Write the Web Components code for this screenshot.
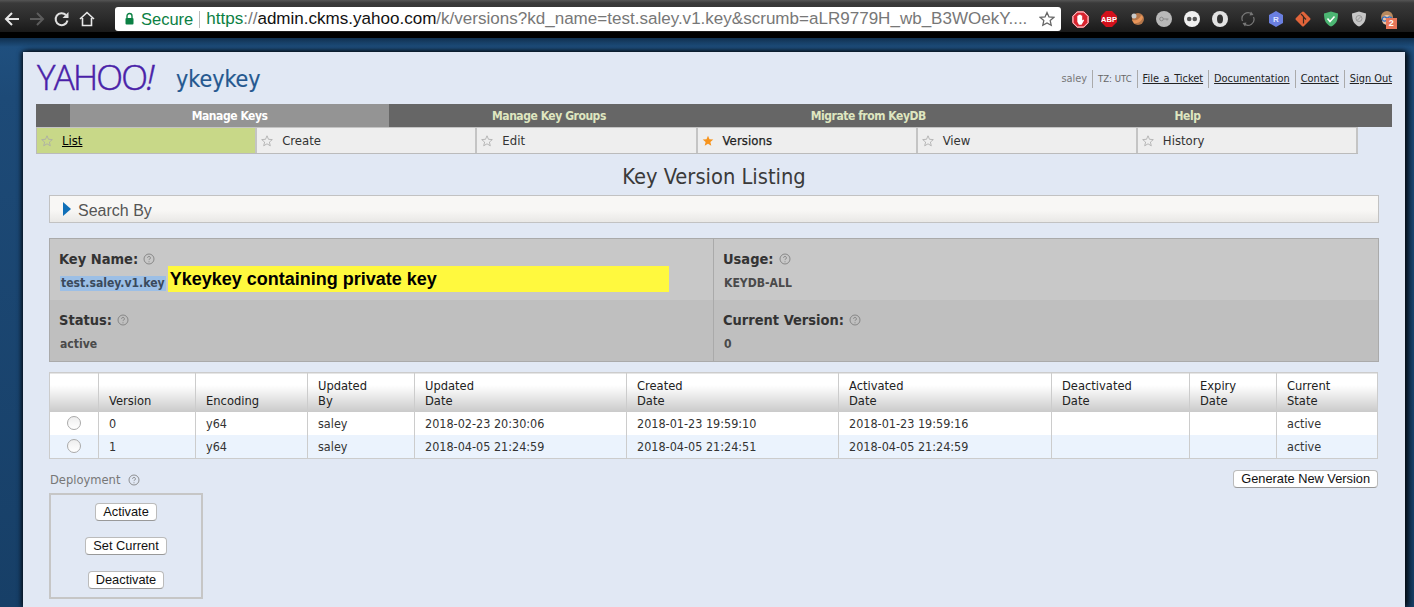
<!DOCTYPE html>
<html>
<head>
<meta charset="utf-8">
<title>Key Version Listing</title>
<style>
  html, body { margin: 0; height: 607px; overflow: hidden; }
  body { background: #1d4a77; font-family: "Open Sans", sans-serif; display: flex; flex-direction: column; }
</style>
</head>
<body>
<browser-bar></browser-bar>
<page-frame>
  <site-header></site-header>
  <main-nav></main-nav>
  <sub-nav></sub-nav>
  <page-title>Key Version Listing</page-title>
  <search-by></search-by>
  <key-info></key-info>
  <version-table></version-table>
  <deploy-panel></deploy-panel>
</page-frame>

<script>
const TEXT_FONT = '"DejaVu Sans Condensed", "DejaVu Sans", sans-serif';

function help(size) {
  return `<svg width="${size}" height="${size}" viewBox="0 0 12 12" style="flex:none"><circle cx="6" cy="6" r="5" fill="none" stroke="#777" stroke-width=".8"/><path d="M4.6 4.8a1.4 1.4 0 1 1 2.1 1.2c-.5.3-.7.5-.7 1.1" fill="none" stroke="#777" stroke-width=".8"/><circle cx="6" cy="8.7" r=".5" fill="#777"/></svg>`;
}

function star(on) {
  const path = "M6 .8l1.5 3.5 3.8.3-2.9 2.5.9 3.7L6 8.8l-3.3 2 .9-3.7L.7 4.6l3.8-.3z";
  return on
    ? `<svg width="12" height="12" viewBox="0 0 12 12" style="flex:none"><path d="${path}" fill="#f7941d"/></svg>`
    : `<svg width="12" height="12" viewBox="0 0 12 12" style="flex:none"><path d="${path}" fill="none" stroke="#aaa" stroke-width=".8"/></svg>`;
}

class BrowserBar extends HTMLElement {
  constructor() {
    super();
    const shadow = this.attachShadow({ mode: "open" });
    shadow.innerHTML = `
      <style>
        :host { display: flex; align-items: center; height: 38px; flex: none; box-sizing: border-box; padding: 6px 0 6px 0;
          background: linear-gradient(#555 0, #3a3a3a 3px, #2a2a2a 50%, #1a1a1a 83%, #000 85%, #000 100%); font-family: "Liberation Sans", sans-serif; }
        .navs { display: flex; align-items: center; width: 115px; flex: none; padding-left: 4px; box-sizing: border-box; gap: 9px; }
        .omni { width: 946px; height: 24px; flex: none; box-sizing: border-box; background: #fff; border-radius: 3px; display: flex; align-items: center; padding: 0 6px 0 9px; white-space: nowrap; overflow: hidden; }
        .sec { color: #0b8043; font-size: 16.5px; margin-left: 6px; }
        .sep { width: 1px; height: 17px; background: #bbb; margin: 0 6px 0 6px; flex: none; }
        .url { flex: 1; min-width: 0; color: #777; font-size: 17.05px; overflow: hidden; }
        .url b { font-weight: 400; color: #111; }
        .url i { font-style: normal; color: #0b8043; }
        .exts { display: flex; align-items: center; flex: 1; padding-left: 11px; gap: 11.8px; }
        .exts svg { flex: none; display: block; }
      </style>
      <div class="navs">
        <svg width="16" height="16" viewBox="0 0 16 16"><path d="M15 8H2M8 2L2 8l6 6" fill="none" stroke="#e8e8e8" stroke-width="2"/></svg>
        <svg width="16" height="16" viewBox="0 0 16 16"><path d="M1 8h13M8 2l6 6-6 6" fill="none" stroke="#5c5c5c" stroke-width="2"/></svg>
        <svg width="16" height="16" viewBox="0 0 16 16"><path d="M13.5 9.5A6 6 0 1 1 12 4" fill="none" stroke="#e0e0e0" stroke-width="2"/><path d="M14.5 1v6h-6z" fill="#e0e0e0"/></svg>
        <svg width="16" height="16" viewBox="0 0 16 16"><path d="M1 8l7-6.5L15 8M3.5 7v7.5h9V7" fill="none" stroke="#e8e8e8" stroke-width="1.6"/></svg>
      </div>
      <div class="omni">
        <svg width="11" height="14" viewBox="0 0 11 14" style="flex:none"><path d="M3 6V4a2.5 2.5 0 0 1 5 0v2" fill="none" stroke="#0b8043" stroke-width="1.4"/><rect x="1.5" y="6" width="8" height="6.5" rx="1" fill="#0b8043"/></svg>
        <span class="sec">Secure</span><span class="sep"></span>
        <span class="url"><i>https</i>://<b>admin.ckms.yahoo.com</b>/k/versions?kd_name=test.saley.v1.key&amp;scrumb=aLR9779H_wb_B3WOekY....</span>
        <svg width="16" height="16" viewBox="0 0 16 16" style="flex:none"><path d="M8 1.5l2 4.4 4.8.5-3.6 3.2 1 4.7L8 11.9l-4.2 2.4 1-4.7L1.2 6.4 6 5.900z" fill="none" stroke="#666" stroke-width="1.3"/></svg>
      </div>
      <div class="exts">
        <svg width="17" height="17" viewBox="0 0 16 16"><path d="M5 0h6l5 5v6l-5 5H5l-5-5V5z" fill="#d9232e"/><path d="M5 0.900h6L15.100 5v6L11 15.100H5L.9 11V5z" fill="none" stroke="#fff" stroke-width=".9"/><path d="M5 8V4.500h1V7.500V3.500h1.200V7.500V3.500h1.200V7.500V4.200h1.200V9l1-1 .8.6L9 13H6.500L5 10z" fill="#fff"/></svg>
        <svg width="16" height="16" viewBox="0 0 16 16"><path d="M5 0h6l5 5v6l-5 5H5l-5-5V5z" fill="#d3111c"/><text x="8" y="10.800" text-anchor="middle" font-size="7.500" font-weight="700" fill="#fff" font-family="Liberation Sans">ABP</text></svg>
        <svg width="16" height="16" viewBox="0 0 16 16"><circle cx="9" cy="8" r="6" fill="#b3764a"/><path d="M3 9c4 1 8-1 9-5l2 2c-1 4-5 7-9 6z" fill="#e9965a"/><circle cx="5" cy="5" r="2.500" fill="#c9c9c9"/></svg>
        <svg width="16" height="16" viewBox="0 0 16 16"><circle cx="8" cy="8" r="8" fill="#b8b8b8"/><circle cx="5.500" cy="8" r="1.800" fill="none" stroke="#888" stroke-width="1"/><path d="M7.300 8h5.200M11 8v1.500" stroke="#888"/></svg>
        <svg width="16" height="16" viewBox="0 0 16 16"><circle cx="8" cy="8" r="8" fill="#f0f0f0"/><circle cx="5.200" cy="8" r="2.300" fill="#555"/><circle cx="10.800" cy="8" r="2.300" fill="#555"/></svg>
        <svg width="16" height="16" viewBox="0 0 16 16"><circle cx="8" cy="8" r="8" fill="#e2e2e2"/><ellipse cx="8" cy="8" rx="3" ry="4.500" fill="#333"/></svg>
        <svg width="16" height="16" viewBox="0 0 16 16"><path d="M2.500 10A6 6 0 0 1 12 3.200M13.500 6A6 6 0 0 1 4 12.800" fill="none" stroke="#777" stroke-width="1.200"/><path d="M11 .5l2.500 3.500-4 .5zM5 15.500L2.500 12l4-.5z" fill="#777"/></svg>
        <svg width="16" height="16" viewBox="0 0 16 16"><path d="M8 0l7 4v8l-7 4-7-4V4z" fill="#6a7fe0"/><text x="8" y="11" text-anchor="middle" font-size="8" font-weight="700" fill="#dfe4ff" font-family="Liberation Sans">R</text></svg>
        <svg width="16" height="16" viewBox="0 0 16 16"><rect x="2.300" y="2.300" width="11.400" height="11.400" rx="1.500" transform="rotate(45 8 8)" fill="#e2643a"/><path d="M6 3l2.500 2.500v7M8.500 6l2.500 2.500" stroke="#3a2a20" stroke-width="1.200" fill="none"/></svg>
        <svg width="16" height="16" viewBox="0 0 16 16"><path d="M1 2.500L8 .5l7 2c0 7-2 11-7 13-5-2-7-6-7-13z" fill="#4cb673"/><path d="M4.500 7.500L7 10.500l4.500-5" stroke="#fff" stroke-width="1.600" fill="none"/></svg>
        <svg width="16" height="16" viewBox="0 0 16 16"><path d="M1 2.500L8 .5l7 2c0 7-2 11-7 13-5-2-7-6-7-13z" fill="#c6c6c6"/><circle cx="8" cy="7.500" r="3" fill="none" stroke="#999" stroke-width="1"/><path d="M6 9.500l4-4" stroke="#999"/></svg>
        <div style="position:relative;width:16px;height:16px;flex:none">
          <svg width="16" height="16" viewBox="0 0 16 16"><circle cx="8" cy="6" r="6" fill="#b98a5e"/><circle cx="8" cy="9" r="5" fill="#e8c4a8"/><circle cx="5.500" cy="8" r="2.200" fill="none" stroke="#2d6cc0" stroke-width="1.200"/><circle cx="10.500" cy="8" r="2.200" fill="none" stroke="#2d6cc0" stroke-width="1.200"/></svg>
          <span style="position:absolute;left:7px;top:7px;width:11px;height:11px;background:#e8765a;color:#fff;font:700 9px/11px 'Liberation Sans';text-align:center">2</span>
        </div>
      </div>
    `;
  }
}

class PageFrame extends HTMLElement {
  constructor() {
    super();
    const shadow = this.attachShadow({ mode: "open" });
    shadow.innerHTML = `
      <style>
        :host { display: block; flex: 1; min-height: 0; overflow: hidden; padding: 14px 9px 0 23px;
          background: linear-gradient(#10304f, #1f4f7e 9px, #1d4a77 60px, #173f67 100%); }
        .sheet { display: flex; flex-direction: column; height: 555px; box-sizing: border-box; padding: 0 13px 0 13px;
          background: #e1e8f4; box-shadow: 0 -1px 5px rgba(0,0,0,.5), 4px 0 6px rgba(0,0,0,.75), -2px 0 4px rgba(0,0,0,.5); font-family: ${TEXT_FONT}; }
      </style>
      <div class="sheet"><slot></slot></div>
    `;
  }
}

class SiteHeader extends HTMLElement {
  constructor() {
    super();
    const shadow = this.attachShadow({ mode: "open" });
    shadow.innerHTML = `
      <style>
        :host { display: flex; align-items: flex-start; height: 52px; flex: none; }
        .logo { font-family: "Open Sans", sans-serif; font-weight: 300; font-size: 35px; line-height: 50px; letter-spacing: -1.8px; color: #4a1fa8; width: 139px; flex: none; margin-left: 1px; -webkit-text-stroke: .5px #4a1fa8; }
        .logo em { font-style: italic; }
        .name { font-size: 23px; line-height: 55px; color: #25588f; flex: 1; -webkit-text-stroke: .2px #25588f; }
        .links { display: flex; align-items: center; margin-top: 18px; font-size: 10.900px; color: #333; }
        .links span, .links a { padding: 0 5px; border-left: 1px solid #aaa; line-height: 18px; white-space: nowrap; }
        .links span:first-child { border: 0; color: #777; }
        .links span:nth-child(2) { color: #666; font-size: 9.500px; }
        .links a { color: #222; text-decoration: underline; }
        .links a:first-of-type { word-spacing: 1.500px; }
        .links a:last-child { padding-right: 0; }
      </style>
      <div class="logo">YAHOO<em>!</em></div>
      <div class="name">ykeykey</div>
      <div class="links">
        <span>saley</span><span>TZ: UTC</span><a>File a Ticket</a><a>Documentation</a><a>Contact</a><a>Sign Out</a>
      </div>
    `;
  }
}

class MainNav extends HTMLElement {
  constructor() {
    super();
    const shadow = this.attachShadow({ mode: "open" });
    const items = ["Manage Keys", "Manage Key Groups", "Migrate from KeyDB", "Help"];
    shadow.innerHTML = `
      <style>
        :host { display: grid; grid-template-columns: 34px repeat(4, 319.300px) 1fr; height: 23px; flex: none; background: #666; }
        div { text-align: center; font-size: 12px; letter-spacing: -.45px; font-weight: 700; line-height: 24px; color: #dfe6c0; white-space: nowrap; }
        .on { background: #949494; color: #fff; }
      </style>
      <span></span>
      ${items.map((t, i) => `<div class="${i == 0 ? "on" : ""}">${t}</div>`).join("")}
      <span></span>
    `;
  }
}

class SubNav extends HTMLElement {
  constructor() {
    super();
    const shadow = this.attachShadow({ mode: "open" });
    const items = ["List", "Create", "Edit", "Versions", "View", "History"];
    shadow.innerHTML = `
      <style>
        :host { display: grid; grid-template-columns: repeat(6, 1fr); width: 1322px; height: 27px; flex: none; box-sizing: border-box; border-top: 1px solid #c4c4c4; border-bottom: 1px solid #bbb; border-left: 1px solid #bbb; }
        div { display: flex; align-items: center; gap: 9px; padding-left: 4px; background: #eee; border-right: 2px solid #c4c4c4; font-size: 13px; color: #333; }
        .on { background: #c8d888; color: #111; }
        .on span { text-decoration: underline; color: #000; }
        .cur span { color: #222; -webkit-text-stroke: .25px #222; letter-spacing: .1px; }
      </style>
      ${items.map((t, i) => `<div class="${i == 0 ? "on" : i == 3 ? "cur" : ""}">${star(i == 3)}<span>${t}</span></div>`).join("")}
    `;
  }
}

class PageTitle extends HTMLElement {
  constructor() {
    super();
    const shadow = this.attachShadow({ mode: "open" });
    shadow.innerHTML = `
      <style>
        :host { display: block; flex: none; height: 41px; text-align: center; font-size: 21.700px; line-height: 45px; color: #3a3a3a; }
      </style>
      <slot></slot>
    `;
  }
}

class SearchBy extends HTMLElement {
  constructor() {
    super();
    const shadow = this.attachShadow({ mode: "open" });
    shadow.innerHTML = `
      <style>
        :host { display: flex; align-items: center; gap: 7px; flex: none; box-sizing: border-box; height: 28px; margin: 0 13px; padding: 0 0 0 13px;
          border: 1px solid #c2c2c2; background: linear-gradient(#f8f7f5 55%, #e9e8e6); font-family: "Liberation Sans", sans-serif; font-size: 16px; color: #555; }
        span { padding-top: 3px; }
      </style>
      <svg width="8" height="14" viewBox="0 0 8 14"><path d="M0 0l8 7-8 7z" fill="#0f6fb8"/></svg>
      <span>Search By</span>
    `;
  }
}

class InfoCell extends HTMLElement {
  constructor() {
    super();
    const shadow = this.attachShadow({ mode: "open" });
    shadow.innerHTML = `
      <style>
        :host { display: block; box-sizing: border-box; padding: 9px 10px 0 10px; }
        .k { display: flex; align-items: center; gap: 5px; margin-left: -1px; font-size: 14.500px; line-height: 22px; font-weight: 700; color: #333; }
        .v { display: flex; align-items: center; height: 26px; font-size: 12.100px; font-weight: 700; color: #4a4a4a; }
      </style>
      <div class="k"><span>${this.getAttribute("label")}:</span>${help(12)}</div>
      <div class="v"><slot></slot></div>
    `;
  }
}

class KeyInfo extends HTMLElement {
  constructor() {
    super();
    const shadow = this.attachShadow({ mode: "open" });
    shadow.innerHTML = `
      <style>
        :host { display: grid; grid-template-columns: 664px 1fr; grid-template-rows: 61px 61px; flex: none; margin: 15px 13px 0; border: 1px solid #aaa; background: #c8c8c8; }
        .b { background: #bfbfbf; }
        .l { border-right: 1px solid #aaa; }
        .sel { background: #9cbfe6; color: #3a4a5c; padding: 0 1px; line-height: 15px; }
        .note { display: block; width: 501px; height: 26px; margin: -8px 0 0 2px; padding-left: 2px; box-sizing: border-box; background: #fff93e; color: #000; font: 700 18px/26px "Liberation Sans", sans-serif; }
      </style>
      <info-cell class="l" label="Key Name"><span class="sel">test.saley.v1.key</span><span class="note">Ykeykey containing private key</span></info-cell>
      <info-cell label="Usage">KEYDB-ALL</info-cell>
      <info-cell class="b l" label="Status">active</info-cell>
      <info-cell class="b" label="Current Version">0</info-cell>
    `;
  }
}

class VersionTable extends HTMLElement {
  constructor() {
    super();
    const shadow = this.attachShadow({ mode: "open" });
    const head = ["", "Version", "Encoding", "Updated<br>By", "Updated<br>Date", "Created<br>Date", "Activated<br>Date", "Deactivated<br>Date", "Expiry<br>Date", "Current<br>State"];
    const rows = [
      ["0", "y64", "saley", "2018-02-23 20:30:06", "2018-01-23 19:59:10", "2018-01-23 19:59:16", "", "", "active"],
      ["1", "y64", "saley", "2018-04-05 21:24:59", "2018-04-05 21:24:51", "2018-04-05 21:24:59", "", "", "active"],
    ];
    shadow.innerHTML = `
      <style>
        :host { display: block; flex: none; margin: 10px 14px 0 13px; }
        table { border-collapse: collapse; table-layout: fixed; width: 1329px; font-size: 12.800px; color: #333; }
        th, td { border: 1px solid #ccc; padding: 0 10px; text-align: left; }
        th { height: 39px; font-weight: 400; color: #222; line-height: 15px; vertical-align: bottom; padding-bottom: 4px; box-sizing: border-box; border-bottom: 0;
          background: linear-gradient(#fff 30%, #c9c9c9); }
        td { height: 23px; box-sizing: border-box; background: #fff; font-size: 12.500px; line-height: 15px; border-top: 0; border-bottom: 0; }
        tr.alt td { height: 24px; background: #ebf3fd; border-bottom: 1px solid #ccc; }
        .dot { display: block; width: 14px; height: 14px; box-sizing: border-box; margin: 0 auto; border: 1px solid #aaa; border-radius: 50%; background: linear-gradient(#eee, #fff); }
        td:first-child { padding: 0 1px 0 0; }
      </style>
      <table>
        <colgroup>
          <col style="width:49px"><col style="width:97px"><col style="width:112px"><col style="width:107px"><col style="width:212px"><col style="width:212px"><col style="width:213px"><col style="width:138px"><col style="width:87px"><col>
        </colgroup>
        <tr>${head.map(h => `<th>${h}</th>`).join("")}</tr>
        ${rows.map((r, i) => `<tr class="${i ? "alt" : ""}"><td><span class="dot"></span></td>${r.map(c => `<td>${c}</td>`).join("")}</tr>`).join("")}
      </table>
    `;
  }
}

class PlainButton extends HTMLElement {
  constructor() {
    super();
    const shadow = this.attachShadow({ mode: "open" });
    shadow.innerHTML = `
      <style>
        :host { display: inline-block; box-sizing: border-box; height: 18px; padding: 0 7px; background: #fff; border: 1px solid #bbb; border-bottom-color: #999; border-radius: 4px;
          font: 12.800px/16px "Liberation Sans", sans-serif; color: #111; white-space: nowrap; }
      </style>
      <slot></slot>
    `;
  }
}

class DeployPanel extends HTMLElement {
  constructor() {
    super();
    const shadow = this.attachShadow({ mode: "open" });
    shadow.innerHTML = `
      <style>
        :host { display: flex; justify-content: space-between; align-items: flex-start; flex: none; margin: 11px 14px 0 13px; }
        .lab { display: flex; align-items: center; gap: 8px; height: 19px; font-size: 12.800px; color: #777; margin-left: 1px; }
        .box { display: flex; flex-direction: column; align-items: center; gap: 16px; width: 154px; height: 106px; box-sizing: border-box; margin-top: 4px; padding-top: 8px; border: 2px solid #c6c6c6; }
      </style>
      <div>
        <div class="lab"><span>Deployment</span>${help(12)}</div>
        <div class="box">
          <plain-button>Activate</plain-button>
          <plain-button>Set Current</plain-button>
          <plain-button>Deactivate</plain-button>
        </div>
      </div>
      <plain-button>Generate New Version</plain-button>
    `;
  }
}

customElements.define("info-cell", InfoCell);
customElements.define("plain-button", PlainButton);
customElements.define("browser-bar", BrowserBar);
customElements.define("page-frame", PageFrame);
customElements.define("site-header", SiteHeader);
customElements.define("main-nav", MainNav);
customElements.define("sub-nav", SubNav);
customElements.define("page-title", PageTitle);
customElements.define("search-by", SearchBy);
customElements.define("key-info", KeyInfo);
customElements.define("version-table", VersionTable);
customElements.define("deploy-panel", DeployPanel);
</script>
</body>
</html>
